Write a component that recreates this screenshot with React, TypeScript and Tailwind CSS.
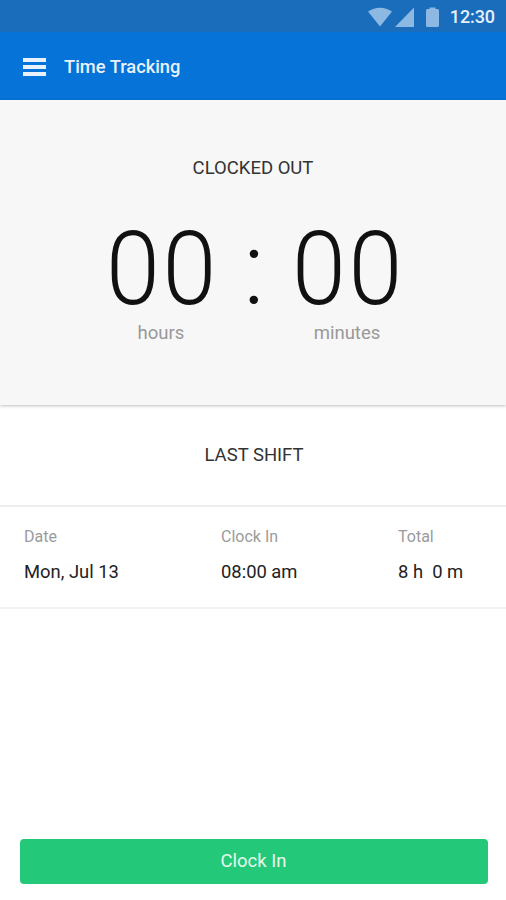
const shift = [
  { label: 'Date', value: 'Mon, Jul 13', width: 'w-[197px]' },
  { label: 'Clock In', value: '08:00 am', width: 'w-[177px]' },
  { label: 'Total', value: '8 h  0 m', width: 'w-[100px]' },
]

function StatusBar() {
  return (
    <div className="flex h-8 items-center justify-end bg-[#196dbb] pr-[11px] pt-px text-[#8cb8e2]">
      <svg width="24" height="20" viewBox="0 0 24 20" fill="currentColor">
        <path d="M0 4.6C7-.7 17-.7 24 4.6L12 19.600z" />
      </svg>
      <svg className="ml-[3px]" width="19" height="20" viewBox="0 0 19 20" fill="currentColor">
        <path d="M19 .5V20H0z" />
      </svg>
      <svg className="ml-3" width="13" height="20" viewBox="0 0 13 20" fill="currentColor">
        <path d="M3.500 .5h6v1.500h2q1.500 0 1.500 1.500v15q0 1.500-1.500 1.500h-10q-1.500 0-1.500-1.500V3.500q0-1.500 1.500-1.500h2z" />
      </svg>
      <span className="ml-[11px] text-[18px] font-medium leading-[30px] tracking-[-0.1px] text-[#e6f0fb]">12:30</span>
    </div>
  )
}

function Header() {
  return (
    <header className="flex h-[68px] items-center bg-[#0573d7] pl-[23px] pt-px text-[#e9f1fc]">
      <button className="flex w-[23px] flex-col gap-[3px]" aria-label="Menu">
        <span className="h-[4px] w-full bg-current" />
        <span className="h-[4px] w-full bg-current" />
        <span className="h-[4px] w-full bg-current" />
      </button>
      <h1 className="ml-[18px] pt-px text-[18.300px] font-medium leading-6">Time Tracking</h1>
    </header>
  )
}

function ClockUnit({ value, label }: { value: string; label: string }) {
  return (
    <div className="flex w-[116px] flex-col items-center">
      <span className="-mr-[3px] scale-x-[0.95] text-[102px] font-light leading-[100px] tracking-[3px] text-[#111]">
        {value}
      </span>
      <span className="mt-[2px] text-[18.500px] leading-6 text-[#999]">{label}</span>
    </div>
  )
}

export default function App() {
  return (
    <div className="flex h-[900px] w-[506px] flex-col bg-white font-['Roboto',sans-serif]">
      <StatusBar />
      <Header />

      <section className="h-[305px] bg-[#f7f7f7] pt-[56px] shadow-[0_1px_3px_rgba(0,0,0,0.25)]">
        <h2 className="text-center text-[18.500px] leading-6 text-[#333]">CLOCKED OUT</h2>
        <div className="mt-[39px] flex justify-center pl-[2px]">
          <ClockUnit value="00" label="hours" />
          <span className="w-[70px] text-center text-[102px] font-light leading-[100px] text-[#111]">:</span>
          <ClockUnit value="00" label="minutes" />
        </div>
      </section>

      <section>
        <h2 className="flex h-[100px] items-center justify-center pl-[2px] pt-[2px] text-[18.500px] text-[#333]">
          LAST SHIFT
        </h2>
        <div className="flex h-[104px] border-y-2 border-t-[#eee] border-b-[#f3f3f3] pl-6 pt-5">
          {shift.map((item) => (
            <div key={item.label} className={item.width}>
              <div className="text-[16px] leading-5 text-[#9b9b9b]">{item.label}</div>
              <div className="mt-[13px] whitespace-pre text-[18.400px] leading-6 text-[#222]">{item.value}</div>
            </div>
          ))}
        </div>
      </section>

      <button className="ml-5 mr-[18px] mb-4 mt-auto h-[45px] rounded-[4px] bg-[#24c879] pr-px text-[18.500px] text-[#e3faed]">
        Clock In
      </button>
    </div>
  )
}
